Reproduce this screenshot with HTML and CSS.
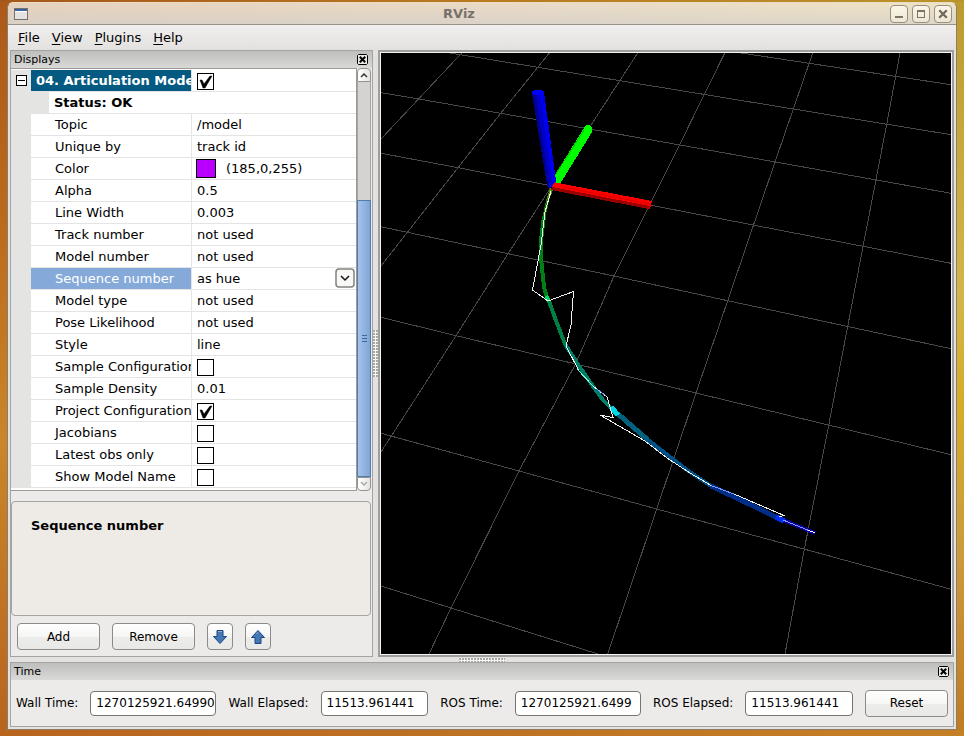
FILE: index.html
```html
<!DOCTYPE html>
<html lang="en">
<head>
<meta charset="utf-8">
<title>RViz</title>
<link rel="stylesheet" href="styles.css">
</head>
<body>
<div class="window">
  <header class="titlebar">
    <svg class="app-icon" width="14" height="12" viewBox="0 0 14 12" shape-rendering="crispEdges" aria-hidden="true">
      <rect x="0.5" y="0.5" width="13" height="11" fill="#e4e2df" stroke="#74716c"/>
      <rect x="1" y="1" width="12" height="2" fill="#3b649b"/>
      <rect x="1" y="3" width="12" height="1" fill="#fff"/>
    </svg>
    <h1 class="title">RViz</h1>
    <div class="window-buttons">
      <button class="window-button" type="button" aria-label="Minimize"><svg width="16" height="16" viewBox="0 0 16 16"><rect x="4" y="10" width="8" height="2" fill="#7b7365"/></svg></button>
      <button class="window-button" type="button" aria-label="Maximize"><svg width="16" height="16" viewBox="0 0 16 16"><path d="M4 4h8v8H4zM5 6v5h6V6z" fill="#7b7365" fill-rule="evenodd"/></svg></button>
      <button class="window-button" type="button" aria-label="Close"><svg width="16" height="16" viewBox="0 0 16 16"><path d="M5 5l6 6M11 5l-6 6" stroke="#6f685b" stroke-width="2.2" stroke-linecap="square"/></svg></button>
    </div>
  </header>

  <nav class="menubar">
    <button type="button"><u>F</u>ile</button>
    <button type="button"><u>V</u>iew</button>
    <button type="button"><u>P</u>lugins</button>
    <button type="button"><u>H</u>elp</button>
  </nav>

  <main class="workspace">
    <section class="panel displays">
      <div class="panel-header">
        <h2>Displays</h2>
        <button class="panel-close" type="button" aria-label="Close Displays"><svg width="11" height="11" viewBox="0 0 11 11"><path d="M1.500 .5h8l1 1v8l-1 1h-8l-1-1v-8z" fill="#e8e8e6" stroke="#000"/><path d="M3.500 3.500l4 4M7.500 3.500l-4 4" stroke="#000" stroke-width="2" stroke-linecap="square"/></svg></button>
      </div>

      <div class="tree">
        <div class="tree-view">
          <table class="properties">
            <colgroup><col class="col-gutter"><col class="col-name"><col></colgroup>
            <tbody>
              <tr class="group"><td class="gutter"><button class="expander" type="button" aria-label="Collapse"></button></td><th scope="row">04. Articulation Models</th><td><input type="checkbox" aria-label="Articulation Models" checked></td></tr>
              <tr class="status"><td class="gutter"></td><th scope="row" colspan="2">Status: OK</th></tr>
              <tr><td class="gutter"></td><th scope="row">Topic</th><td>/model</td></tr>
              <tr><td class="gutter"></td><th scope="row">Unique by</th><td>track id</td></tr>
              <tr><td class="gutter"></td><th scope="row">Color</th><td><div class="color-value"><span class="swatch"></span>(185,0,255)</div></td></tr>
              <tr><td class="gutter"></td><th scope="row">Alpha</th><td>0.5</td></tr>
              <tr><td class="gutter"></td><th scope="row">Line Width</th><td>0.003</td></tr>
              <tr><td class="gutter"></td><th scope="row">Track number</th><td>not used</td></tr>
              <tr><td class="gutter"></td><th scope="row">Model number</th><td>not used</td></tr>
              <tr class="selected"><td class="gutter"></td><th scope="row"><label for="sequence">Sequence number</label></th><td><div class="choice"><select id="sequence"><option>as hue</option><option>not used</option></select><svg width="20" height="20" viewBox="0 0 20 20" aria-hidden="true"><rect x="1" y="1" width="18" height="18" rx="3" fill="#f8f8f7" stroke="#85827c" stroke-width="1.500"/><path d="M6 8l4 4 4-4" fill="none" stroke="#111" stroke-width="1.500"/></svg></div></td></tr>
              <tr><td class="gutter"></td><th scope="row">Model type</th><td>not used</td></tr>
              <tr><td class="gutter"></td><th scope="row">Pose Likelihood</th><td>not used</td></tr>
              <tr><td class="gutter"></td><th scope="row">Style</th><td>line</td></tr>
              <tr><td class="gutter"></td><th scope="row"><label for="sample">Sample Configurations</label></th><td><input id="sample" type="checkbox"></td></tr>
              <tr><td class="gutter"></td><th scope="row">Sample Density</th><td>0.01</td></tr>
              <tr><td class="gutter"></td><th scope="row"><label for="project">Project Configurations</label></th><td><input id="project" type="checkbox" checked></td></tr>
              <tr><td class="gutter"></td><th scope="row"><label for="jacobians">Jacobians</label></th><td><input id="jacobians" type="checkbox"></td></tr>
              <tr><td class="gutter"></td><th scope="row"><label for="latest">Latest obs only</label></th><td><input id="latest" type="checkbox"></td></tr>
              <tr><td class="gutter"></td><th scope="row"><label for="showname">Show Model Name</label></th><td><input id="showname" type="checkbox"></td></tr>
            </tbody>
          </table>
        </div>
        <div class="scrollbar">
          <button class="scroll-step up" type="button" aria-label="Scroll up"><svg width="12" height="12" viewBox="0 0 12 12"><path d="M3 8l3-3 3 3" fill="none" stroke="#333" stroke-width="1.500"/></svg></button>
          <div class="scroll-track"></div>
          <div class="scroll-thumb"><i></i><i></i><i></i></div>
          <button class="scroll-step down" type="button" aria-label="Scroll down"><svg width="12" height="12" viewBox="0 0 12 12"><path d="M3 4l3 3 3-3" fill="none" stroke="#aaa" stroke-width="1.500"/></svg></button>
        </div>
      </div>

      <div class="description"><h3>Sequence number</h3></div>

      <div class="actions">
        <button class="button" type="button">Add</button>
        <button class="button" type="button">Remove</button>
        <button class="button icon" type="button" aria-label="Move down"><svg width="16" height="16" viewBox="0 0 16 16"><path d="M5 1.500h6v6h3.500L8 14.500 1.500 7.500H5z" fill="#4378b5" stroke="#1d4480"/><path d="M6 2.500h4" stroke="#8fb0d8"/></svg></button>
        <button class="button icon" type="button" aria-label="Move up"><svg width="16" height="16" viewBox="0 0 16 16"><path d="M5 14.500h6v-6h3.500L8 1.500 1.500 8.500H5z" fill="#4378b5" stroke="#1d4480"/><path d="M6.500 5L8 3.200" stroke="#8fb0d8"/></svg></button>
      </div>
    </section>

    <div class="splitter vertical"><span></span></div>

    <section class="viewport">
      <svg class="scene" viewBox="381 53 570 601" preserveAspectRatio="xMidYMid slice" shape-rendering="crispEdges" role="img" aria-label="3D view">
        <g fill="none" stroke="#484848">
          <path d="M741 53L951 84.700M450 53L951 134.700M381 92.700L419 99 500.700 113.300 680 145 951 193.300M381 153.300L458 167.700 660 207 951 263.300M381 226.700L508 253.700 614 276 727.700 300.700 951 348.700M381 317.300L456 335.700 576 364 696 393 951 454.700M381 433.300L519 471 656.700 509 805 549.300 951 589.300M381 586L451 608 598 654"/>
          <path d="M461.700 53L381 139M549.300 53L500.700 113.300 458 167.700 381 266M637.700 53L591.700 124 508 253.700 456 335.700 381 452M724.700 53L679.300 145.300 614 276 576 363 519 471 451 608 429 654M812.700 53L775 162 727.700 300.700 696 393 656.700 509 607.700 654M900 53L886.700 124.300 863 246.700 828.700 425.300 804.300 549.300 785 654"/>
        </g>
        <g fill="none" stroke-width="4">
          <path d="M552 188L548 199" stroke="#4f9100" stroke-width="3"/>
          <path d="M548 199L544 216" stroke="#188000" stroke-width="3"/>
          <path d="M544 216L541 240 541 258 544 287 547 298" stroke="#008015"/>
          <path d="M546 296L549 301" stroke="#00dd58"/>
          <path d="M549 301L555 318 565 344" stroke="#008044"/>
          <path d="M565 344L577 363 590 382 603 400 612 409" stroke="#007e68"/>
          <path d="M618 414L648 440" stroke="#00627f" stroke-width="5"/>
          <path d="M611 407L618 415" stroke="#00d6e6" stroke-width="5"/>
          <path d="M648 440L678 463 687 470 711 486" stroke="#00508a"/>
          <path d="M711 486L745 502 778 518" stroke="#002d88" stroke-width="5"/>
          <path d="M783 520L815 533" stroke="#10009a"/>
          <path d="M776 517L784 521" stroke="#0030ff" stroke-width="5"/>
        </g>
        <path d="M551 191L545 212 541 245 532.500 290 548 301 573.500 291.500 571 325 566 346 579 371 593 386 607 397 613 417.500 600 415 645 441 667 458 690 473 711 485.500 734 494 784 515.500 779 517" fill="none" stroke="#f0f0f0"/>
        <path d="M597 389L606 396M711 485.500L734 494M783 520L810 531" fill="none" stroke="#789cff"/>
        <path d="M577 369L593 386" fill="none" stroke="#78f0d0"/>
        <path d="M808 530L815 533" stroke="#fff"/>
        <path d="M554 185L588 130" stroke="#00fe00" stroke-width="9"/>
        <circle cx="588" cy="129.500" r="4.500" fill="#00ff00"/>
        <path d="M552 180L584 130" stroke="#00c800"/>
        <path d="M553 182L652 201 650 209 551 190z" fill="#fe0000"/>
        <path d="M552 187L650 206 649 209 551 190z" fill="#9a0000"/>
        <path d="M563 187L649 204" stroke="#e00000"/>
        <path d="M532 92L544 92 556 181 550 189 547 185z" fill="#0000f0"/>
        <path d="M532 94L536 95 550 187 547 185z" fill="#000096"/>
        <path d="M536 95L540 95 553 185 550 188z" fill="#0000c8"/>
        <ellipse cx="538" cy="92.500" rx="6" ry="3" fill="#0000ff"/>
      </svg>
    </section>
  </main>

  <div class="splitter horizontal"><span></span></div>

  <section class="panel time">
    <div class="panel-header">
      <h2>Time</h2>
      <button class="panel-close" type="button" aria-label="Close Time"><svg width="11" height="11" viewBox="0 0 11 11"><path d="M1.500 .5h8l1 1v8l-1 1h-8l-1-1v-8z" fill="#e8e8e6" stroke="#000"/><path d="M3.500 3.500l4 4M7.500 3.500l-4 4" stroke="#000" stroke-width="2" stroke-linecap="square"/></svg></button>
    </div>
    <form class="time-fields">
      <label for="wall-time">Wall Time:</label>
      <input class="wide" id="wall-time" type="text" value="1270125921.649902">
      <label for="wall-elapsed">Wall Elapsed:</label>
      <input id="wall-elapsed" type="text" value="11513.961441">
      <label for="ros-time">ROS Time:</label>
      <input class="wide" id="ros-time" type="text" value="1270125921.6499">
      <label for="ros-elapsed">ROS Elapsed:</label>
      <input id="ros-elapsed" type="text" value="11513.961441">
      <button class="button" type="button">Reset</button>
    </form>
  </section>
</div>
</body>
</html>
```

FILE: styles.css
```css
* {
  box-sizing: border-box;
}

body {
  margin: 0;
  padding: 2px 7px 6px;
  min-height: 100vh;
  display: flex;
  background:
    linear-gradient(90deg, #a5581a, #b97a20 50%, #b9942c) top / 100% 2px no-repeat,
    linear-gradient(90deg, #b8641e, #c58026) bottom / 100% 6px no-repeat,
    linear-gradient(180deg, #ab5a1a, #bb6a1c 30%, #c9862a 60%, #b8641e) left / 50% 100% no-repeat,
    linear-gradient(180deg, #bd9a30, #d4b548 40%, #d5ac2a 55%, #cd9a3c 75%, #c07a22) right / 50% 100% no-repeat;
  font-family: "DejaVu Sans", sans-serif;
  font-size: 13px;
  color: #000;
}

button,
input,
select {
  font: inherit;
  color: inherit;
}

h1,
h2,
h3 {
  margin: 0;
}

.window {
  flex: 1;
  min-width: 0;
  display: flex;
  flex-direction: column;
  padding: 0 2px 2px;
  background: #e3e2e0;
  border: 1px solid #8d7c66;
  border-top-color: #ecdcc4;
  border-radius: 6px 6px 0 0;
}

/* Title bar */
.titlebar {
  display: flex;
  align-items: center;
  height: 22px;
  margin: 0 -2px;
  padding: 0 4px 0 6px;
  border-bottom: 1px solid #999087;
  border-radius: 5px 5px 0 0;
  background: linear-gradient(180deg, rgba(255, 255, 255, 0.2), rgba(214, 212, 208, 0.7)), linear-gradient(90deg, #e2c6ac, #e6d3b8 60%, #ebdcb6);
}

.title {
  flex: 1;
  font-size: 13px;
  text-align: center;
  color: #77716a;
}

.window-buttons {
  display: flex;
  gap: 4px;
}

.window-button {
  width: 18px;
  height: 18px;
  padding: 0;
  border: 1px solid #988f80;
  border-radius: 4px;
  background: linear-gradient(#fbf6e8, #eee6d4);
}

.window-button svg,
.app-icon,
.panel-close svg,
.button svg,
.scroll-step svg {
  display: block;
}

/* Menu */
.menubar {
  display: flex;
  gap: 12px;
  height: 25px;
  margin: 0 -2px;
  padding-left: 10px;
  background: linear-gradient(#f0efee, #e2e1df);
}

.menubar button {
  padding: 0;
  border: 0;
  background: none;
}

.menubar u {
  text-underline-offset: 2px;
}

/* Panels */
.workspace {
  flex: 1;
  display: flex;
  min-height: 0;
}

.panel {
  border: 1px solid #a3a3a1;
  background: #ecebe9;
}

.panel-header {
  display: flex;
  align-items: center;
  justify-content: space-between;
  height: 17px;
  padding: 0 4px 0 3px;
  background: linear-gradient(#bebebc, #d9d9d7);
}

.panel-header h2 {
  font-size: 11px;
  font-weight: normal;
}

.panel-close {
  padding: 0;
  border: 0;
  background: none;
}

.displays {
  flex: 0 0 363px;
  display: flex;
  flex-direction: column;
}

/* Property tree */
.tree {
  display: flex;
  padding-right: 1px;
}

.tree-view {
  flex: 1;
  min-width: 0;
  padding: 1px 0 2px;
  border: 1px solid #9c9b98;
  border-width: 1px 1px 1px 0;
  background: #fff;
}

.properties {
  width: 100%;
  table-layout: fixed;
  border-collapse: separate;
  border-spacing: 0;
}

.col-gutter {
  width: 20px;
}

.col-name {
  width: 161px;
}

.properties tr {
  height: 22px;
}

.properties th,
.properties td {
  height: 22px;
  padding: 0 0 0 5px;
  border-bottom: 1px solid #e4e4e4;
  line-height: 20px;
  font-weight: normal;
  text-align: left;
  white-space: nowrap;
  overflow: hidden;
}

.properties th {
  padding-left: 24px;
  border-right: 1px solid #e4e4e4;
}

.properties .gutter {
  padding: 0 0 0 5px;
  border-bottom-color: #e4e4e3;
  background: #e4e4e3;
}

.properties .group th {
  padding-left: 5px;
  background: #045a80;
  color: #fff;
  font-weight: bold;
}

.properties .status th {
  padding-left: 5px;
  border-left: 18px solid #e4e4e3;
  border-right: 0;
  font-weight: bold;
}

.properties .selected th {
  background: #85aad9;
  color: #fff;
}

.expander {
  display: block;
  width: 11px;
  height: 11px;
  padding: 0;
  border: 1px solid #000;
  background: linear-gradient(#000, #000) center / 7px 1px no-repeat #fff;
}

.properties input {
  appearance: none;
  display: block;
  width: 17px;
  height: 17px;
  margin: 2px 0 0;
  border: 1px solid #000;
  background: #fff;
}

.properties input:checked {
  background: center / 15px 15px no-repeat url("data:image/svg+xml,%3Csvg xmlns='http://www.w3.org/2000/svg' viewBox='0 0 15 15'%3E%3Cpath d='M2 6h2l2 4 6-8h2L7 14H5z' fill='%23000' stroke='%23000' stroke-width='.5'/%3E%3C/svg%3E") #fff;
}

.color-value {
  display: flex;
  align-items: center;
  gap: 10px;
  margin-left: -1px;
}

.swatch {
  width: 20px;
  height: 19px;
  border: 1px solid #000;
  background: #b900ff;
}

.choice {
  display: flex;
  height: 21px;
  padding-right: 1px;
}

.choice select {
  appearance: none;
  flex: 1;
  padding: 0;
  border: 0;
  background: none;
}

/* Scrollbar */
.scrollbar {
  display: flex;
  flex-direction: column;
  width: 14px;
}

.scroll-step {
  height: 14px;
  padding: 0;
  border: 1px solid #96938e;
  background: linear-gradient(90deg, #fff, #e4e4e2);
}

.scroll-step.up {
  border-radius: 4px 4px 0 0;
}

.scroll-step.down {
  border-radius: 0 0 4px 4px;
}

.scroll-track {
  flex: 118;
  border: 1px solid #a5a3a0;
  border-width: 0 1px;
  background: #d4d3d1;
}

.scroll-thumb {
  flex: 276;
  display: flex;
  flex-direction: column;
  align-items: center;
  justify-content: center;
  gap: 2px;
  border: 1px solid #517cae;
  background: linear-gradient(90deg, #a5c3ea, #80a5d6);
}

.scroll-thumb i {
  width: 5px;
  height: 1px;
  background: #3d6597;
}

/* Description and actions */
.description {
  flex: 1;
  margin: 10px 1px 0 0;
  padding: 16px 19px;
  border: 1px solid #a5a4a1;
  border-radius: 4px;
  background: #eeebe7;
}

.description h3 {
  font-size: 13px;
}

.actions {
  display: flex;
  gap: 12px;
  padding: 7px 6px 6px;
}

.button {
  width: 83px;
  height: 27px;
  padding: 0;
  border: 1px solid #8d8b86;
  border-radius: 4px;
  background: linear-gradient(#fff, #f6f6f5 50%, #ececea 51%, #e9e9e7);
  font-size: 12px;
}

.button.icon {
  display: grid;
  place-items: center;
  width: 26px;
}

/* Splitters */
.splitter {
  display: flex;
  align-items: center;
  justify-content: center;
}

.splitter span {
  background:
    radial-gradient(circle at 1px 1px, #a9a7a4 1px, transparent 1px) 0 0 / 3px 3px,
    #f6f6f5;
}

.splitter.vertical {
  width: 5px;
}

.splitter.vertical span {
  width: 5px;
  height: 47px;
}

.splitter.horizontal {
  height: 5px;
}

.splitter.horizontal span {
  width: 46px;
  height: 4px;
}

/* 3D view */
.viewport {
  flex: 1;
  min-width: 0;
  display: flex;
  border: 2px solid #9f9e9c;
  outline: 1px solid #f4f4f2;
  outline-offset: -3px;
  padding: 1px;
  background: #000;
}

.scene {
  flex: 1;
  width: 100%;
  min-width: 0;
}

/* Time panel */
.time-fields {
  display: flex;
  align-items: center;
  gap: 12px;
  height: 46px;
  padding: 0 5px;
  font-size: 12px;
}

.time-fields label {
  white-space: nowrap;
}

.time-fields input {
  flex: 105 1 105px;
  min-width: 0;
  height: 25px;
  padding: 0 0 0 5px;
  border: 1px solid #77756f;
  border-radius: 4px;
  background: #fff;
}

.time-fields input.wide {
  flex: 123 1 123px;
}
```
